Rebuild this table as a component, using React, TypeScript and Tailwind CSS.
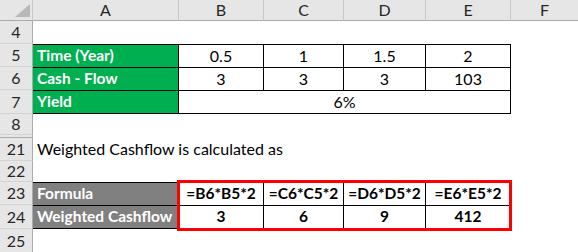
import React from "react";

const font = { fontFamily: "Lato, 'Liberation Sans', sans-serif" };

function RowHead({ n, extra = "" }: { n?: string; extra?: string }) {
  return (
    <div
      className={`w-[33px] shrink-0 h-full bg-[#e6e6e6] border-r border-b border-r-[#ababab] border-b-[#d4d4d4] flex items-center justify-center text-[16px] text-[#262626] ${extra}`}
    >
      {n}
    </div>
  );
}

const val = "h-full border-l border-black flex items-center justify-center text-[16px] whitespace-nowrap";
const bval = "h-full border-l border-black flex items-center justify-center font-bold text-[15.5px] whitespace-nowrap";
const label = "w-[145px] h-full flex items-center pl-[4px] text-white font-bold text-[15.5px] whitespace-nowrap";

export default function App() {
  const cols = ["A", "B", "C", "D", "E"];
  const widths = ["w-[145px]", "w-[85px]", "w-[80px]", "w-[82px]", "w-[85px]"];

  return (
    <div className="relative w-[578px] h-[252px] overflow-hidden bg-white text-black" style={font}>
      {/* column headers */}
      <div className="flex h-[21px]">
        <div className="w-[33px] shrink-0 h-full bg-[#e6e6e6] border-r border-b border-r-[#c8c8c8] border-b-[#ababab] flex items-end justify-end pr-[2px] pb-[3px]">
          <svg width="15" height="13" viewBox="0 0 15 13">
            <polygon points="15,0 15,13 0,13" fill="#b8b8b8" />
          </svg>
        </div>
        {cols.map((c, i) => (
          <div
            key={c}
            className={`${widths[i]} shrink-0 h-full bg-[#e6e6e6] border-b border-b-[#ababab] ${i > 0 ? "border-l border-l-[#c8c8c8]" : ""} flex items-center justify-center text-[16px] text-[#262626]`}
          >
            {c}
          </div>
        ))}
        <div className="flex-1 h-full bg-[#e6e6e6] border-b border-l border-b-[#ababab] border-l-[#c8c8c8] flex items-center justify-center text-[16px] text-[#262626]">
          F
        </div>
      </div>

      {/* row 4 */}
      <div className="flex h-[23px]">
        <RowHead n="4" />
        <div className="flex-1" />
      </div>

      {/* rows 5–7: inputs */}
      <div className="flex h-[23px]">
        <RowHead n="5" />
        <div className={`${label} bg-[#00b050] border-t border-black`}>Time (Year)</div>
        <div className={`${val} w-[85px] border-t`}>0.5</div>
        <div className={`${val} w-[80px] border-t`}>1</div>
        <div className={`${val} w-[82px] border-t`}>1.5</div>
        <div className={`${val} w-[85px] border-t`}>2</div>
        <div className="flex-1 h-full border-l border-black" />
      </div>
      <div className="flex h-[23px]">
        <RowHead n="6" />
        <div className={`${label} bg-[#00b050] border-t border-black`}>Cash - Flow</div>
        <div className={`${val} w-[85px] border-t`}>3</div>
        <div className={`${val} w-[80px] border-t`}>3</div>
        <div className={`${val} w-[82px] border-t`}>3</div>
        <div className={`${val} w-[85px] border-t`}>103</div>
        <div className="flex-1 h-full border-l border-black" />
      </div>
      <div className="flex h-[24px]">
        <RowHead n="7" />
        <div className={`${label} bg-[#00b050] border-y border-black`}>Yield</div>
        <div className={`${val} w-[332px] border-y`}>6%</div>
        <div className="flex-1 h-full border-l border-black" />
      </div>

      {/* row 8, then hidden rows 9–20 */}
      <div className="flex h-[21px]">
        <RowHead n="8" extra="border-b-[#ababab]" />
        <div className="flex-1" />
      </div>
      <div className="flex h-[2px]">
        <div className="w-[33px] h-full bg-[#e6e6e6] border-r border-r-[#ababab]" />
      </div>

      {/* row 21 */}
      <div className="flex h-[24px]">
        <RowHead n="21" extra="border-t border-t-[#ababab]" />
        <div className="flex-1 flex items-center pl-[4px] text-[16px] whitespace-nowrap">
          Weighted Cashflow is calculated as
        </div>
      </div>
      {/* row 22 */}
      <div className="flex h-[21px]">
        <RowHead n="22" />
        <div className="flex-1" />
      </div>

      {/* rows 23–24: results */}
      <div className="flex h-[23px]">
        <RowHead n="23" />
        <div className={`${label} bg-[#808080] border-t border-black`}>Formula</div>
        <div className={`${bval} w-[85px] border-t`}>=B6*B5*2</div>
        <div className={`${bval} w-[80px] border-t`}>=C6*C5*2</div>
        <div className={`${bval} w-[82px] border-t`}>=D6*D5*2</div>
        <div className={`${bval} w-[85px] border-t`}>=E6*E5*2</div>
        <div className="flex-1 h-full border-l border-black" />
      </div>
      <div className="flex h-[24px]">
        <RowHead n="24" />
        <div className={`${label} bg-[#808080] border-y border-black`}>Weighted Cashflow</div>
        <div className={`${bval} w-[85px] border-y`}>3</div>
        <div className={`${bval} w-[80px] border-y`}>6</div>
        <div className={`${bval} w-[82px] border-y`}>9</div>
        <div className={`${bval} w-[85px] border-y`}>412</div>
        <div className="flex-1 h-full border-l border-black" />
      </div>

      {/* row 25 */}
      <div className="flex h-[24px]">
        <RowHead n="25" />
        <div className="flex-1" />
      </div>

      {/* red highlight around the results */}
      <div className="absolute left-[177px] top-[180px] w-[335px] h-[51px] border-[3px] border-[#ff0000] pointer-events-none" />
    </div>
  );
}
